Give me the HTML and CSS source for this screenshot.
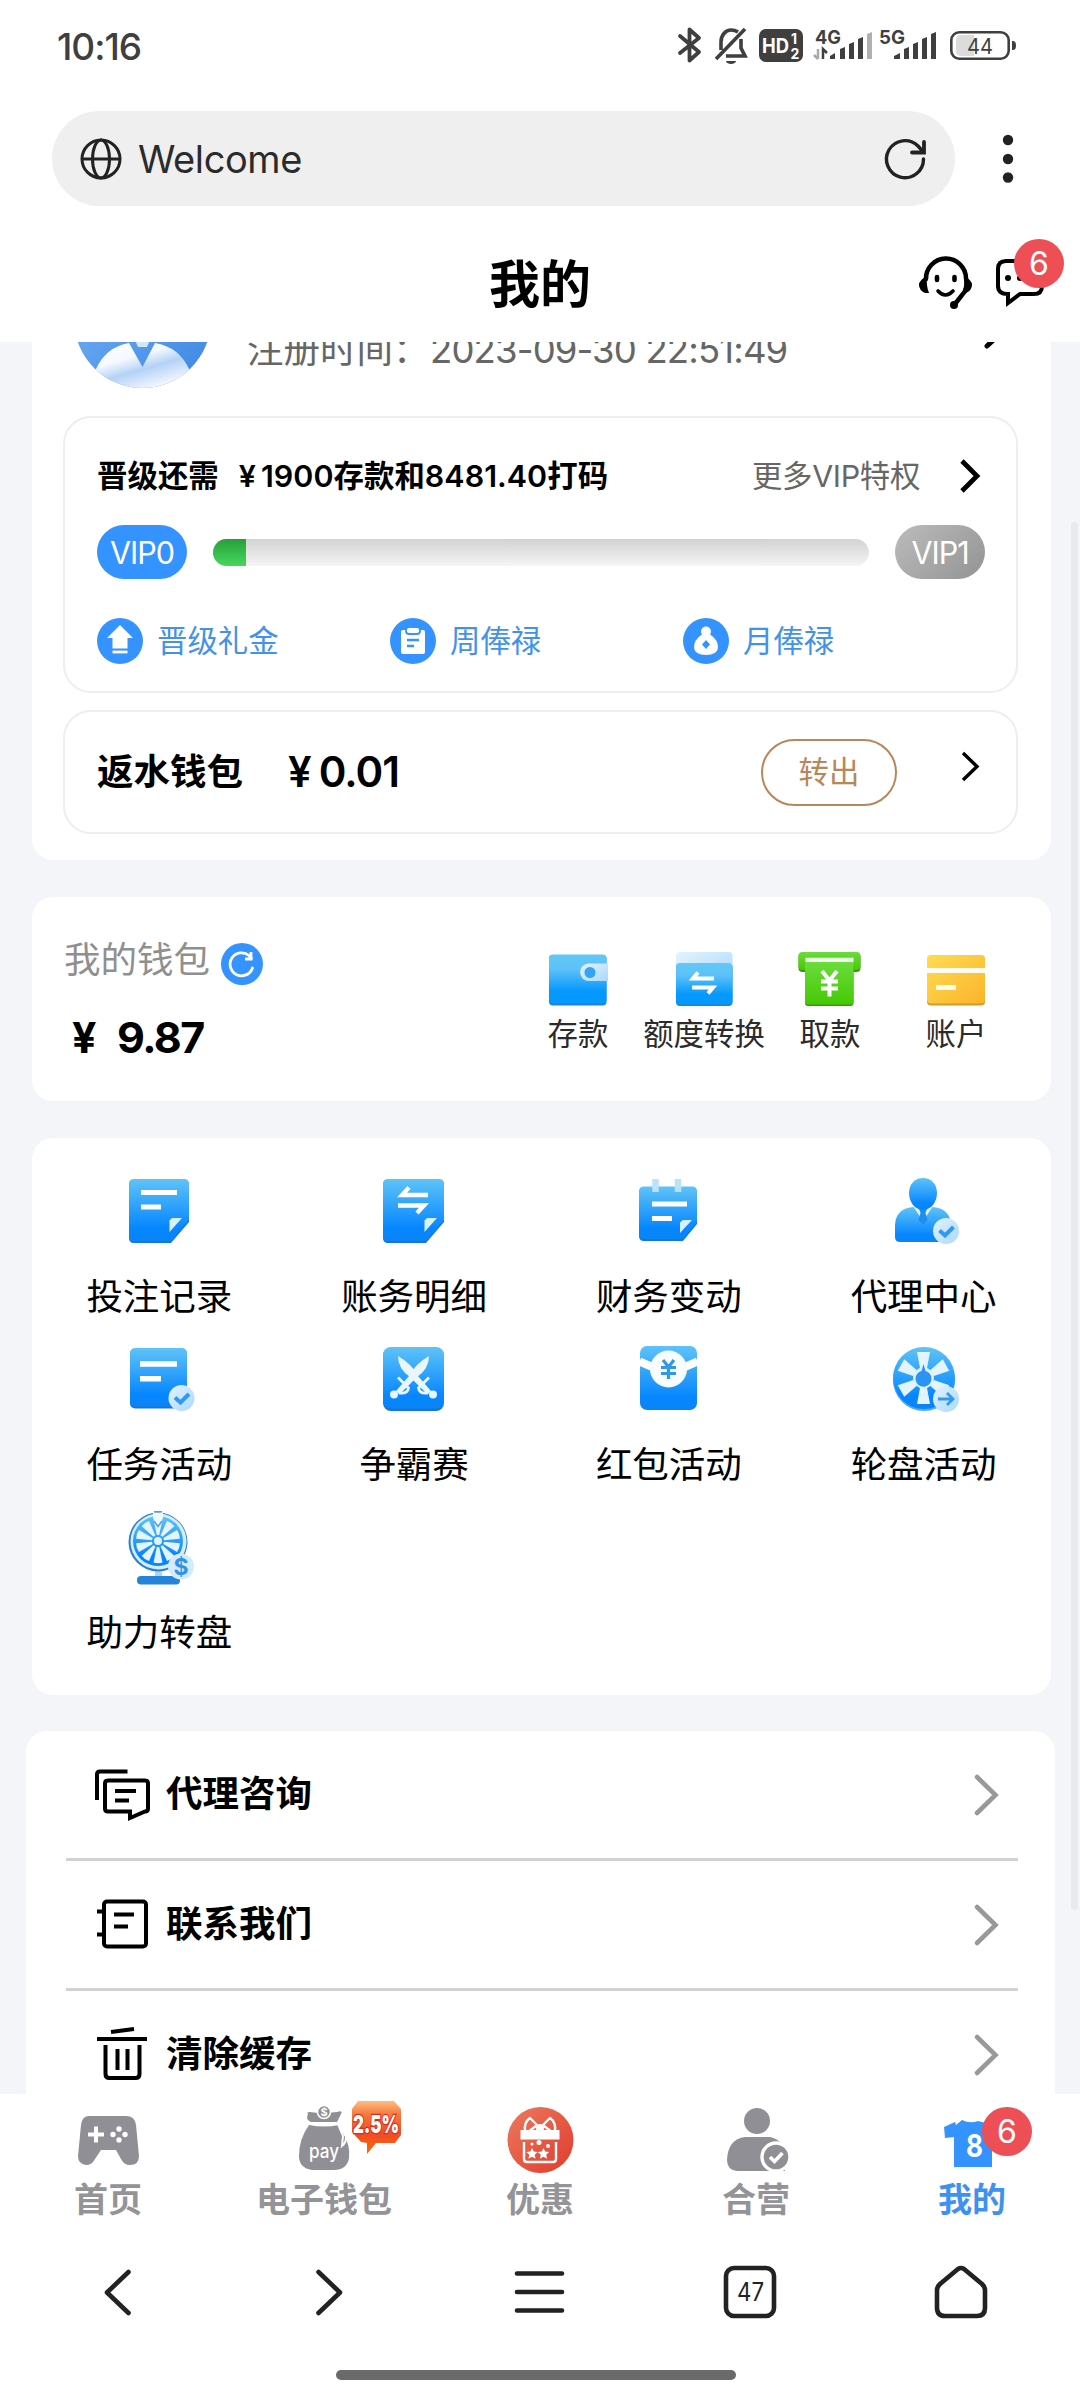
FILE: index.html
```html
<!DOCTYPE html>
<html lang="zh-CN">
<head>
<meta charset="utf-8">
<title>我的</title>
<link rel="stylesheet" href="styles.css">
</head>
<body>
<svg class="defs" width="0" height="0">
  <defs>
    <linearGradient id="blue" x1="0" y1="0" x2="0" y2="1"><stop offset="0" stop-color="#5fc3f8"/><stop offset=".8" stop-color="#0686ff"/><stop offset="1" stop-color="#0a84f5"/></linearGradient>
    <linearGradient id="sky" x1="0" y1="0" x2="0" y2="1"><stop offset="0" stop-color="#62c8f8"/><stop offset=".3" stop-color="#5cc1f7"/><stop offset=".75" stop-color="#0598ff"/><stop offset="1" stop-color="#0598ff"/></linearGradient>
    <linearGradient id="pale" x1="0" y1="0" x2="1" y2="1"><stop offset="0" stop-color="#e4f3ff"/><stop offset="1" stop-color="#a9d8fd"/></linearGradient>
    <linearGradient id="green" x1="0" y1="0" x2="0" y2="1"><stop offset="0" stop-color="#6bdc3c"/><stop offset="1" stop-color="#45c904"/></linearGradient>
    <linearGradient id="gold" x1="0" y1="0" x2="1" y2="1"><stop offset="0" stop-color="#ffdc52"/><stop offset="1" stop-color="#fbb42b"/></linearGradient>
    <linearGradient id="shine" x1="0" y1="0" x2="1" y2="0"><stop offset="0" stop-color="#0b6fd6"/><stop offset=".45" stop-color="#8fd2ff"/><stop offset="1" stop-color="#0b74df"/></linearGradient>
    <linearGradient id="sail" x1="0" y1="0" x2=".6" y2="1"><stop offset="0" stop-color="#ffffff"/><stop offset=".4" stop-color="#f4f9ff"/><stop offset=".65" stop-color="#b4d2f6"/><stop offset="1" stop-color="#f2f7fe"/></linearGradient>
    <linearGradient id="deep" x1="0" y1="0" x2="1" y2="1"><stop offset="0" stop-color="#79b6f7"/><stop offset="1" stop-color="#3b85e3"/></linearGradient>
    <linearGradient id="flame" x1="0" y1="0" x2="0" y2="1"><stop offset="0" stop-color="#ffbe7d"/><stop offset=".25" stop-color="#f5793f"/><stop offset=".6" stop-color="#ef4a2a"/><stop offset="1" stop-color="#ff6a00"/></linearGradient>
    <linearGradient id="coral" x1="0" y1="0" x2="1" y2="1"><stop offset="0" stop-color="#ec7a5e"/><stop offset="1" stop-color="#e03b2d"/></linearGradient>
    <clipPath id="face"><circle cx="68.5" cy="68.5" r="68.5"/></clipPath>
  </defs>
</svg>

<header class="top">
  <div class="status">
    <span class="clock">10:16</span>
    <div class="indicators">
      <svg width="26" height="40" viewBox="0 0 26 40" fill="none" stroke="#3f3f3f" stroke-width="3.8" stroke-linejoin="round" stroke-linecap="round"><path d="M3 11 22 27 12.5 35.500V4.500L22 13 3 28"/></svg>
      <svg width="34" height="40" viewBox="0 0 34 40" fill="none" stroke="#3f3f3f" stroke-width="3.600"><path d="M7 25V17a10 12 0 0 1 10-12q4 0 7 2M27 14V23l4 8H12M2 34 31 4"/><path d="M12 36a5 3 0 0 0 10 0z" fill="#3f3f3f" stroke="none"/></svg>
      <svg width="44" height="40" viewBox="0 0 44 40"><rect y="4" width="44" height="33" rx="7" fill="#3f3f3f"/><text class="glyph heavy" x="3" y="27.500" font-size="20" textLength="27" lengthAdjust="spacingAndGlyphs" fill="#fff">HD</text><text class="glyph heavy" x="32" y="19" font-size="14" fill="#fff">1</text><text class="glyph heavy" x="31.500" y="33.500" font-size="14" fill="#fff">2</text></svg>
      <svg width="60" height="40" viewBox="0 0 60 40" fill="#3f3f3f"><text class="glyph heavy" x="1" y="18.500" font-size="19" textLength="26" lengthAdjust="spacingAndGlyphs">4G</text><path d="M4 24v10M0 30l4 4" stroke="#aaa" stroke-width="2.500" fill="none"/><path d="M9 34V24l4 4" stroke="#3f3f3f" stroke-width="2.500" fill="none"/><path d="M16 34v-3l5-3v6zM26 34V24l5-2v12zM35 34V19l5-2v17zM44 34V14l5-2v22z"/><path d="M53 34V9l5-2v27z" fill="#b0b0b0"/></svg>
      <svg width="60" height="40" viewBox="0 0 60 40" fill="#3f3f3f"><text class="glyph heavy" x="0" y="18.500" font-size="19" textLength="26" lengthAdjust="spacingAndGlyphs">5G</text><path d="M15 34v-3l6-3v6zM25 34V24l5-2v12zM34 34V19l5-2v17zM43 34V14l5-2v22zM52 34V9l5-2v27z"/></svg>
      <svg width="68" height="40" viewBox="0 0 68 40"><rect x="1.300" y="7.300" width="57.400" height="26.400" rx="8" fill="#fff" stroke="#3f3f3f" stroke-width="2.600"/><path d="M11 10h13v21H11q-5 0-5-5V15q0-5 5-5z" fill="#dcdcdc"/><path d="M62 16h1q3 0 3 4.500t-3 4.500h-1z" fill="#3f3f3f"/><text class="glyph" x="17" y="28.500" font-size="22" textLength="26" lengthAdjust="spacingAndGlyphs" fill="#3f3f3f">44</text></svg>
    </div>
  </div>
  <div class="address">
    <div class="field">
      <svg width="42" height="42" viewBox="0 0 42 42" fill="none" stroke="#222" stroke-width="3"><circle cx="21" cy="21" r="19"/><ellipse cx="21" cy="21" rx="8.500" ry="19"/><path d="M2 21h38"/></svg>
      <span class="site">Welcome</span>
      <svg width="42" height="42" viewBox="0 0 42 42" fill="none" stroke="#222" stroke-width="3.400"><path d="M39.500 21A18.500 18.500 0 1 1 34 8l4 4.500" stroke-linecap="round"/><path d="M40 4v10.500H28" stroke-width="3.800" stroke-linecap="round"/></svg>
    </div>
    <svg width="12" height="50" viewBox="0 0 12 50" fill="#222"><circle cx="6" cy="6" r="5.200"/><circle cx="6" cy="25" r="5.200"/><circle cx="6" cy="43.500" r="5.200"/></svg>
  </div>
  <div class="titlebar">
    <h1>我的</h1>
    <div class="actions">
      <svg width="54" height="54" viewBox="0 0 54 54" fill="none" stroke="#000" stroke-width="4.500" stroke-linecap="round"><path d="M7 22a19.500 19.500 0 0 1 40-1q2 12-4 17l-7 9"/><path d="M8 19q-8 4-8 9t6 8l4 0q-3-7-2-17zM45 19q8 4 8 9t-6 8l-4 0q4-7 2-17z" fill="#000" stroke="none"/><circle cx="35" cy="48" r="4" fill="#000" stroke="none"/><path d="M18 20v3M35.500 20v3" stroke-width="4.600"/><path d="M19 34q7.500 8 15 0" stroke-width="3.600"/></svg>
      <div class="messages">
        <svg width="48" height="50" viewBox="0 0 48 50"><path d="M10 4h28q8 0 8 8v17q0 8-8 8H24L12 46v-9q-10 0-10-8V12q0-8 8-8z" fill="none" stroke="#000" stroke-width="4"/><circle cx="12" cy="21" r="3"/><circle cx="24" cy="21" r="3"/></svg>
        <span class="count">6</span>
      </div>
    </div>
  </div>
</header>

<main class="scroll">
  <section class="card member">
    <div class="profile">
      <svg class="avatar" width="137" height="137" viewBox="0 0 137 137"><g clip-path="url(#face)"><rect width="137" height="137" fill="url(#deep)"/><path d="M55 92 68.500 116 81 92q24 4 34 26v19H22v-19q10-22 33-26z" fill="url(#sail)"/><path d="M61 89h15l-3 7h-9z" fill="#cfe9fb"/></g></svg>
      <span class="since">注册时间：</span><span class="date">2023-09-30 22:51:49</span>
      <svg class="more" width="24" height="36" viewBox="0 0 24 36" fill="none" stroke="#000" stroke-width="5" stroke-linecap="round"><path d="M4 3 20 18 4 33"/></svg>
    </div>
    <div class="panel vip">
      <div class="need">
        <strong>晋级还需<i>¥</i>1900存款和8481.40打码</strong>
        <span>更多VIP特权</span>
        <svg width="24" height="36" viewBox="0 0 24 36" fill="none" stroke="#000" stroke-width="4.800"><path d="M4 3 19 18 4 33"/></svg>
      </div>
      <div class="level">
        <span class="pill">VIP0</span>
        <div class="track"><div class="bar" style="width:5%"></div></div>
        <span class="pill next">VIP1</span>
      </div>
      <ul class="perks">
        <li><svg width="46" height="46" viewBox="0 0 46 46"><circle cx="23" cy="23" r="23" fill="#3593ff"/><path d="M23 7 36 20h-5.500v10.500h-15V20H10z" fill="#fff"/><path d="M15.500 34h15" stroke="#fff" stroke-width="2.800"/></svg>晋级礼金</li>
        <li><svg width="46" height="46" viewBox="0 0 46 46"><circle cx="23" cy="23" r="23" fill="#3593ff"/><path d="M13 12h20q2 0 2 2v20q0 2-2 2H13q-2 0-2-2V14q0-2 2-2z" fill="#fff"/><rect x="16" y="9" width="14" height="7" rx="3" fill="#fff" stroke="#3593ff" stroke-width="1.800"/><path d="M17 22h12M17 28h7" stroke="#3593ff" stroke-width="2.400"/></svg>周俸禄</li>
        <li><svg width="46" height="46" viewBox="0 0 46 46"><circle cx="23" cy="23" r="23" fill="#3593ff"/><circle cx="23" cy="13.500" r="5" fill="#fff"/><path d="M19.500 16h7q9 6 8.500 14-1 7-12 7t-12-7q-.5-8 8.500-14z" fill="#fff"/><path d="m23 22 4 4.500-4 4.500-4-4.500z" fill="#3593ff"/></svg>月俸禄</li>
      </ul>
    </div>
    <div class="panel rebate">
      <strong>返水钱包</strong>
      <b class="sum"><i>¥</i>0.01</b>
      <button>转出</button>
      <svg width="24" height="34" viewBox="0 0 24 34" fill="none" stroke="#000" stroke-width="3.400"><path d="M4 4 18 17.500 4 31"/></svg>
    </div>
  </section>

  <section class="card wallet">
    <div class="balance">
      <div class="caption">我的钱包<svg width="42" height="42" viewBox="0 0 42 42" fill="none" stroke="#fff" stroke-width="2.800"><circle cx="21" cy="21" r="21" fill="#3593ff" stroke="none"/><path d="M31.500 25A11.500 11.500 0 1 1 28 12.500l2.500 3" stroke-linecap="round"/><path d="M30 9v7h-6"/></svg></div>
      <div class="money"><i>¥</i>9.87</div>
    </div>
    <ul class="ops">
      <li><svg width="66" height="60" viewBox="0 0 66 60"><rect x="4" y="5" width="57.500" height="50.500" rx="4" fill="#1b82d4"/><rect x="4" y="4.500" width="57.500" height="49" rx="4" fill="url(#sky)"/><path d="M14 54.500h36" stroke="url(#shine)" stroke-width="1.500"/><path d="M63 13.500H43a8.800 8.800 0 0 0 0 17.500H63z" fill="url(#pale)"/><circle cx="45" cy="22.500" r="5.500" fill="#31a4f6"/></svg>存款</li>
      <li><svg width="66" height="60" viewBox="0 0 66 60"><rect x="5" y="2" width="56.500" height="30" rx="4" fill="url(#pale)"/><rect x="5" y="14" width="56.500" height="42" rx="4" fill="#1b82d4"/><rect x="5" y="13" width="56.500" height="41.500" rx="4" fill="url(#sky)"/><path d="M14 55.200h36" stroke="url(#shine)" stroke-width="1.500"/><path d="M43 28.500H22l5-6M21 37.500H42l-5 6" fill="none" stroke="#fff" stroke-width="4"/></svg>额度转换</li>
      <li><svg width="66" height="60" viewBox="0 0 66 60"><rect x="1.500" y="3" width="62" height="19" rx="4" fill="#329c0e"/><rect x="1.500" y="2" width="62" height="18" rx="4" fill="url(#green)"/><path d="M8.500 10h48" stroke="#f0ffe9" stroke-width="4.500"/><rect x="8" y="14" width="48.500" height="42" rx="3" fill="#329c0e"/><rect x="8" y="12" width="48.500" height="42.500" rx="3" fill="url(#green)"/><path d="m25 21 7.500 9.500L40 21M32.500 30v16.500M24 31.500h17M24 38.500h17" fill="none" stroke="#fff" stroke-width="4"/></svg>取款</li>
      <li><svg width="66" height="60" viewBox="0 0 66 60"><rect x="4" y="6" width="58" height="49.500" rx="4" fill="#d4982b"/><rect x="4" y="5" width="58" height="48.500" rx="4" fill="url(#gold)"/><path d="M4 20.500h58M13 37.500h20" stroke="#fffbee" stroke-width="5"/></svg>账户</li>
    </ul>
  </section>

  <section class="card">
    <ul class="grid">
      <li><svg width="66" height="76" viewBox="0 0 66 76"><path d="M9 5h50q5 0 5 5v37L46 68H9q-5 0-5-5V10q0-5 5-5z" fill="#1277dc"/><path d="M9 4h50q5 0 5 5v36L46 66H9q-5 0-5-5V9q0-5 5-5z" fill="url(#blue)"/><path d="M8 66.800h38" stroke="url(#shine)" stroke-width="2"/><path d="M16 17.500h36M16 32h20" stroke="#fff" stroke-width="5"/><path d="M47 43h10L44.500 57V45.500z" fill="#d9f0ff"/></svg>投注记录</li>
      <li><svg width="66" height="76" viewBox="0 0 66 76"><path d="M8 5h51q5 0 5 5v37L46 68H8q-5 0-5-5V10q0-5 5-5z" fill="#1277dc"/><path d="M8 4h51q5 0 5 5v36L46 66H8q-5 0-5-5V9q0-5 5-5z" fill="url(#blue)"/><path d="M8 66.800h38" stroke="url(#shine)" stroke-width="2"/><path d="M48 20H22l7-7.500M18 30.500H44L37 38" fill="none" stroke="#fff" stroke-width="4.300"/><path d="M47 43h10L44.500 57V45.500z" fill="#d9f0ff"/></svg>账务明细</li>
      <li><svg width="66" height="76" viewBox="0 0 66 76"><path d="M9 13h48q5 0 5 5v31L48 66H9q-5 0-5-5V18q0-5 5-5z" fill="#1277dc"/><path d="M9 11.500h48q5 0 5 5V47L48 64H9q-5 0-5-5V16.500q0-5 5-5z" fill="url(#blue)"/><path d="M8 64.800h38" stroke="url(#shine)" stroke-width="2"/><path d="M20.500 4v13M43 4v13" stroke="#b9e2fd" stroke-width="6.500"/><path d="M17 29h35M17 43.500h20" stroke="#fff" stroke-width="5"/><path d="M48 45h9L45 58V47.500z" fill="#d9f0ff"/></svg>财务变动</li>
      <li><svg width="70" height="76" viewBox="-2 0 70 76"><path d="M5 50Q6 33 24 32h18q18 1 19 18v17H10q-5 0-5-5z" fill="url(#blue)"/><path d="M9 67h38" stroke="url(#shine)" stroke-width="1.600"/><path d="m23 31 10 15 10-15z" fill="#eaf6ff"/><path d="m29 34h8l-1.500 4 2 7-4.500 5-4.500-5 2-7z" fill="#1d8ef4"/><path d="M33 3c8 0 14 6 14 15s-6 17-14 17-14-8-14-17S25 3 33 3z" fill="url(#blue)"/><circle cx="56" cy="56" r="13" fill="url(#pale)"/><path d="m49.500 55.500 5.500 5 8.500-8.500" fill="none" stroke="#3199f2" stroke-width="4"/></svg>代理中心</li>
      <li><svg width="72" height="76" viewBox="-3 0 72 76"><rect x="5" y="6" width="57" height="59.500" rx="5" fill="#1277dc"/><rect x="5" y="5" width="57" height="58.500" rx="5" fill="url(#blue)"/><path d="M9 64.300h36" stroke="url(#shine)" stroke-width="2"/><path d="M15 21h37M15 35.800h21" stroke="#fff" stroke-width="5.500"/><circle cx="56.500" cy="55" r="13" fill="url(#pale)"/><path d="m50 54.500 5.500 5 8.500-8.500" fill="none" stroke="#3199f2" stroke-width="4"/></svg>任务活动</li>
      <li><svg width="66" height="76" viewBox="0 0 66 76"><rect x="3" y="5" width="61" height="63" rx="8" fill="#1277dc"/><rect x="3" y="4" width="61" height="61.500" rx="8" fill="url(#blue)"/><path d="M10 66.800h46" stroke="url(#shine)" stroke-width="2"/><g id="saber" fill="#e9f6ff"><path d="M18 13q14 8 20 20l13 15-3.500 3.500L30 34Q18 26 18 13z"/><circle cx="53" cy="51.500" r="4"/><path d="M49 34.500 38.500 45q1 6 9 5" fill="none" stroke="#e9f6ff" stroke-width="2.800"/></g><use href="#saber" transform="matrix(-1 0 0 1 67 0)"/></svg>争霸赛</li>
      <li><svg width="66" height="76" viewBox="0 0 66 76"><rect x="5" y="3" width="57" height="64" rx="7" fill="url(#blue)"/><path d="M10 66h46" stroke="url(#shine)" stroke-width="2"/><path d="m4.500 18.500 14 6M62.500 18.500l-14 6" stroke="#fff" stroke-width="8"/><circle cx="33.500" cy="26" r="18.500" fill="#f7fcff"/><path d="m28 17 5.500 7 5.500-7M33.500 24v12M26 24.500h15M26 30.500h15" fill="none" stroke="#3298e6" stroke-width="3.200"/></svg>红包活动</li>
      <li><svg width="70" height="76" viewBox="-2 0 70 76"><circle cx="34" cy="37" r="31" fill="#52aaf5"/><circle cx="34" cy="35" r="31" fill="url(#blue)"/><g fill="#e4f4ff"><path id="fan" d="M27 9h13l-3 16h-7z"/><use href="#fan" transform="rotate(60 33.500 35)"/><use href="#fan" transform="rotate(120 33.500 35)"/><use href="#fan" transform="rotate(180 33.500 35)"/><use href="#fan" transform="rotate(240 33.500 35)"/><use href="#fan" transform="rotate(300 33.500 35)"/><circle cx="33.500" cy="35" r="10.500"/></g><path d="m33.500 21 2 7a8 8 0 1 1-4 0z" fill="#2b93f3"/><circle cx="56" cy="56" r="13" fill="url(#pale)"/><path d="M48 56h14M57 50l6 6-6 6" fill="none" stroke="#3199f2" stroke-width="2.800"/></svg>轮盘活动</li>
      <li><svg width="70" height="76" viewBox="-2 0 70 76"><rect x="12" y="65" width="43" height="8.500" rx="4" fill="#2484dc"/><path d="M20 70h27" stroke="url(#shine)" stroke-width="4"/><path d="M30 55h7v10h-7z" fill="#a5d8fb"/><circle cx="33" cy="31" r="29.500" fill="#2b83d0"/><circle cx="33.500" cy="30.500" r="28" fill="#d5edff"/><circle cx="33" cy="30" r="25" fill="url(#blue)"/><g fill="#e4f4ff"><path id="slice" d="M28.500 8.500q4.500-1.500 9 0L34.200 24h-2.400z"/><use href="#slice" transform="rotate(36 33 30)"/><use href="#slice" transform="rotate(72 33 30)"/><use href="#slice" transform="rotate(108 33 30)"/><use href="#slice" transform="rotate(144 33 30)"/><use href="#slice" transform="rotate(180 33 30)"/><use href="#slice" transform="rotate(216 33 30)"/><use href="#slice" transform="rotate(252 33 30)"/><use href="#slice" transform="rotate(288 33 30)"/><use href="#slice" transform="rotate(324 33 30)"/></g><circle cx="33" cy="30" r="4" fill="#dff2ff"/><path d="M28 2h10v5l-5 8-5-8z" fill="#eff9ff"/><path d="M29 0h8v1.500h-8z" fill="#4aa3ea"/><path d="m29 10 4 5.500 4-5.500" fill="none" stroke="#4aa3ea" stroke-width="1.500"/><circle cx="56" cy="55.500" r="13" fill="#d4ebfd"/><text class="glyph heavy" x="56" y="64" font-size="23" text-anchor="middle" fill="#2f93e8">$</text></svg>助力转盘</li>
    </ul>
  </section>

  <section class="card menu">
    <a class="row"><svg width="60" height="60" viewBox="0 0 60 60" fill="none" stroke="#000" stroke-width="4"><path d="M35.500 6.500H8q-3 0-3 3V35"/><path d="M16 15.500h37q3 0 3 3v25q0 3-3 3L38 53v-6.500H16q-3 0-3-3v-25q0-3 3-3z"/><path d="M23 26h21M23 35.500h14"/></svg><span>代理咨询</span><svg class="go" width="26" height="42" viewBox="0 0 26 42"><path d="M3 3 21.500 21 3 39"/></svg></a>
    <a class="row"><svg width="60" height="60" viewBox="0 0 60 60" fill="none" stroke="#000" stroke-width="4"><rect x="12" y="6.500" width="42" height="45" rx="3"/><path d="M5 16.500h7M5 39.500h7M22 19.500h20M22 31.500h14"/></svg><span>联系我们</span><svg class="go" width="26" height="42" viewBox="0 0 26 42"><path d="M3 3 21.500 21 3 39"/></svg></a>
    <a class="row"><svg width="60" height="60" viewBox="0 0 60 60" fill="none" stroke="#000" stroke-width="4"><path d="M5 14h50M19 7l23-3M13.500 20v29q0 4 4 4h26q4 0 4-4V20M25.500 24v21M35.500 24v21"/></svg><span>清除缓存</span><svg class="go" width="26" height="42" viewBox="0 0 26 42"><path d="M3 3 21.500 21 3 39"/></svg></a>
  </section>
  <div class="thumb"></div>
</main>

<nav class="tabs">
  <a><svg width="70" height="74" viewBox="1 0 70 74"><path d="M17 12h37q9 0 10 9l3 31q0 9-9 9-6 0-9-6l-5-9H29l-6 9q-3 6-9 6-8-1-8-9l3-31q1-9 8-9z" fill="#8f8f95"/><path d="M16 30.500h16M24 22.500v16" stroke="#fff" stroke-width="4"/><g fill="#fff"><circle cx="47" cy="25" r="2.700"/><circle cx="47" cy="36" r="2.700"/><circle cx="41" cy="30.500" r="2.700"/><circle cx="53" cy="30.500" r="2.700"/></g></svg>首页</a>
  <a><svg width="70" height="74" viewBox="-1 0 70 74"><path d="M18 10q-2-2 2-2 11 2 27 0 6-2 4 2l-4 8H21q-6-3-3-8z" fill="#8f8f95"/><circle cx="34" cy="8" r="6.500" fill="#8f8f95" stroke="#fff" stroke-width="1.500"/><text class="glyph" x="34" y="12" font-size="11" text-anchor="middle" fill="#fff">$</text><path d="M19 21q15 3 30 0l2 5q10 15 8 28-2 12-15 12H22Q9 64 9 52q0-17 10-31z" fill="#8f8f95"/><path d="m48 20 5 12-1 10q4-3 4-9" fill="none" stroke="#fff" stroke-width="2"/><text class="glyph mid" x="34" y="54" font-size="19" text-anchor="middle" textLength="30" lengthAdjust="spacingAndGlyphs" fill="#fff">pay</text></svg>电子钱包
    <svg class="offer" width="54" height="56" viewBox="0 0 54 56"><path d="M9 1h36l7 8v26l-6 8H27l-9 11v-11l-6-1-9-10V9z" fill="url(#flame)"/><text class="glyph black" x="27" y="33" font-size="25" text-anchor="middle" textLength="46" lengthAdjust="spacingAndGlyphs" fill="#fff">2.5%</text></svg></a>
  <a><svg width="70" height="74" viewBox="0 0 70 74"><circle cx="35.500" cy="36" r="33" fill="url(#coral)"/><g fill="none" stroke="#fff" stroke-width="2.400" stroke-linejoin="round"><path d="M20 27q-1-9 5-13l8 8M50 27q1-9-5-13l-8 8M23 28l8-6M47 28l-8-6"/><path d="M19 38v17q0 3 3 3h26q3 0 3-3V38"/></g><rect x="15.500" y="26" width="39" height="9.500" fill="#fff"/><circle cx="35" cy="24" r="4" fill="#fff"/><path id="star" d="m27 44 1.700 3.600 4 .4-3 2.700.9 4-3.600-2-3.600 2 .9-4-3-2.700 4-.4z" fill="#fff"/><use href="#star" x="11.500" y="0"/><circle cx="34" cy="38.500" r="2.500" fill="#fff"/><circle cx="27" cy="40" r="1.500" fill="#fff"/><circle cx="43" cy="42" r="2" fill="#fff"/></svg>优惠</a>
  <a><svg width="70" height="74" viewBox="0 0 70 74"><circle cx="36" cy="17" r="13" fill="#8f8f95"/><path d="M24 33h25q15 3 15 20v14H16Q6 66 6 56q1-21 18-23z" fill="#8f8f95"/><circle cx="55" cy="53" r="14" fill="#8f8f95" stroke="#fff" stroke-width="3.400"/><path d="m49 53 4.500 4.500 8-8.500" fill="none" stroke="#fff" stroke-width="3.600"/></svg>合营</a>
  <a class="on"><svg width="70" height="74" viewBox="0 0 70 74"><path d="m7 23 11-5 1 3 6-5q8 4 16 1l12 3 9 6-4 11-3-2v28H17V33l-9 1z" fill="#3593ff"/><text class="glyph heavy" x="37.500" y="53" font-size="31" text-anchor="middle" textLength="17" lengthAdjust="spacingAndGlyphs" fill="#fff">8</text></svg>我的<span class="count">6</span></a>
</nav>

<nav class="browser">
  <svg width="56" height="56" viewBox="0 0 56 56"><path d="M38.500 8 17 28.500 38.500 49"/></svg>
  <svg width="56" height="56" viewBox="1 0 56 56"><path d="M18.500 8 40 28.500 18.500 49"/></svg>
  <svg width="56" height="56" viewBox="1 0 56 56"><path d="M6 9.500h45M6 28h45M6 46.500h45"/></svg>
  <svg width="56" height="56" viewBox="1 0 56 56"><rect x="4" y="4" width="48" height="48" rx="8"/><text class="glyph" x="28.500" y="37" font-size="25" text-anchor="middle" textLength="27" lengthAdjust="spacingAndGlyphs">47</text></svg>
  <svg width="56" height="56" viewBox="1 0 56 56"><path d="M25 5q3-2 6 0l18 15q3 3 3 6v18q0 8-8 8H12q-8 0-8-8V26q0-3 3-6z"/></svg>
</nav>
<div class="home"></div>
</body>
</html>
```
FILE: styles.css
```css
* { box-sizing: border-box; }
body {
  margin: 0;
  width: 1080px;
  height: 2400px;
  overflow: hidden;
  display: flex;
  flex-direction: column;
  background: #fff;
  color: #000;
  font-family: Inter, "Noto Sans CJK SC", sans-serif;
  line-height: 1;
}
h1, ul { margin: 0; padding: 0; list-style: none; }
i { font-style: normal; }
svg { display: block; flex: none; overflow: visible; }
.defs { position: absolute; }
.glyph { font-family: Inter, sans-serif; stroke: none; }
.glyph.mid { font-weight: 500; }
.glyph.heavy { font-weight: 700; }
.glyph.black { font-weight: 900; stroke: #d92d1e; stroke-width: 2.5px; paint-order: stroke; }

/* Top: status bar, address bar, page title */
.top { flex: none; height: 342px; }
.status { display: flex; align-items: center; justify-content: space-between; height: 92px; padding: 0 62px 0 57px; }
.clock { font-size: 37px; font-weight: 450; color: #3f3f3f; letter-spacing: -1px; }
.indicators { display: flex; gap: 11px; height: 40px; margin-top: -2px; }
.indicators svg:nth-child(5) { margin-left: -6px; }
.address { display: flex; align-items: center; gap: 47px; margin-top: 19px; padding-left: 52px; }
.field { display: flex; align-items: center; width: 903px; height: 95px; padding: 0 29px 0 28px; border-radius: 48px; background: #efefef; }
.site { flex: 1; padding-left: 16px; font-size: 38px; line-height: 46px; letter-spacing: -.4px; color: #2b2b2b; }
.titlebar { display: grid; grid-template-columns: 1fr auto 1fr; align-items: center; height: 136px; padding-top: 20px; }
.titlebar h1 { grid-column: 2; font-size: 51px; font-weight: 700; }
.actions { display: flex; gap: 23px; justify-content: flex-end; padding-right: 36px; }
.messages { position: relative; }
.count {
  position: absolute;
  top: -18px;
  right: -20px;
  width: 50px;
  height: 49px;
  border-radius: 50%;
  background: #ee4f57;
  color: #fff;
  font-size: 32px;
  line-height: 49px;
  text-align: center;
}

/* Scrolling content */
.scroll { position: relative; flex: none; height: 1752px; overflow: hidden; background: #f4f5f8; }
.card { margin: 0 29px 37px 32px; border-radius: 21px; background: #fff; }
.member { margin-top: -93px; padding: 1px 33px 26px 31px; }
.profile { display: flex; align-items: flex-start; height: 166px; padding-left: 11px; color: #666; font-size: 36.500px; }
.avatar { margin-top: 1px; }
.since, .date { margin-top: 82px; line-height: 36px; }
.since { width: 183px; margin-left: 36px; white-space: nowrap; }
.date { font-size: 36.500px; letter-spacing: -.85px; white-space: nowrap; }
.more { margin: 63px 11px 0 auto; }
.panel { border: 2px solid #eee; border-radius: 28px; }
.vip { height: 277px; padding: 40px 31px 0 32px; }
.need { display: flex; align-items: center; height: 36px; }
.need strong { font-size: 30.400px; font-weight: 600; letter-spacing: .05px; white-space: nowrap; }
.need i { margin: 0 5px 0 20px; }
.need span { margin-left: auto; font-size: 30.400px; color: #666; letter-spacing: -.3px; }
.need svg { margin: 0 3px 0 38px; }
.level { display: flex; align-items: center; gap: 26px; height: 54px; margin-top: 31px; }
.pill { width: 90px; height: 54px; border-radius: 27px; background: #3593ff; color: #fff; font-size: 30.500px; line-height: 55px; text-align: center; letter-spacing: -1px; }
.pill.next { background: linear-gradient(135deg, #bcbcbc, #939393); }
.track { flex: 1; height: 27px; border-radius: 14px; background: linear-gradient(#d3d3d3, #f5f5f5); overflow: hidden; }
.bar { height: 27px; background: linear-gradient(#279f3b, #46d75c); }
.perks { display: grid; grid-template-columns: 293px 293px 1fr; margin-top: 39px; }
.perks li { display: flex; align-items: center; gap: 14px; color: #4292ea; font-size: 30.400px; }
.rebate { display: flex; align-items: center; height: 124px; margin-top: 17px; padding: 0 33px 0 32px; }
.rebate strong { font-size: 36.500px; font-weight: 700; }
.sum { margin-left: 45px; font-size: 42px; font-weight: 600; letter-spacing: -1px; }
.sum i { margin-right: 8px; }
.rebate button { width: 136px; height: 67px; margin-left: auto; border: 2px solid #b98659; border-radius: 34px; background: none; color: #b98659; font: 30.400px/1 Inter, "Noto Sans CJK SC", sans-serif; }
.rebate svg { margin: -12px 0 0 62px; }

/* Balance and wallet operations */
.wallet { display: flex; justify-content: space-between; height: 204px; padding: 39px 32px 0; }
.caption { display: flex; align-items: center; gap: 11px; height: 48px; font-size: 36.500px; color: #8f8f8f; }
.caption svg { margin-top: 8px; }
.money { margin-top: 32px; padding-left: 8px; font-size: 43px; font-weight: 650; letter-spacing: -1.5px; }
.money i { margin-right: 22px; }
.ops { display: grid; grid-template-columns: repeat(4, 126px); margin-top: 14px; }
.ops li { display: flex; flex-direction: column; align-items: center; gap: 9px; color: #2b2b2b; font-size: 30.400px; }

/* Feature shortcuts */
.grid { display: grid; grid-template-columns: repeat(4, 1fr); grid-auto-rows: 168px; height: 557px; padding-top: 37px; }
.grid li { display: flex; flex-direction: column; align-items: center; gap: 28px; font-size: 36.500px; }
.grid svg { margin-right: 2px; }

/* Settings list */
.menu { margin: -1px 25px 0 26px; padding: 0 37px 0 40px; height: 420px; }
.row { display: flex; align-items: center; height: 130px; padding: 0 18px 0 26px; border-bottom: 3px solid #d2d2d2; font-size: 36.500px; font-weight: 600; }
.row:last-child { border-color: transparent; }
.row span { margin-left: 14px; }
.go { margin-left: auto; fill: none; stroke: #999; stroke-width: 4.600; stroke-linecap: round; }
.thumb { position: absolute; top: 180px; right: 2px; width: 7px; height: 1388px; border-radius: 4px; background: #e9eaec; }

/* Site tabs */
.tabs { display: grid; grid-template-columns: repeat(5, 1fr); flex: none; height: 136px; padding-top: 10px; }
.tabs a { position: relative; display: flex; flex-direction: column; align-items: center; gap: 5px; color: #939398; font-size: 34px; font-weight: 700; }
.tabs .on { color: #3f91f0; }
.tabs .count { top: 3px; right: 48px; font-weight: 400; }
.offer { position: absolute; top: -4px; left: 133px; }

/* Browser navigation */
.browser { display: flex; justify-content: space-between; flex: none; height: 140px; padding: 34px 90px 0; }
.browser svg { fill: none; stroke: #222; stroke-width: 4.600; stroke-linecap: round; stroke-linejoin: round; }
.browser text { fill: #222; }
.home { flex: none; width: 400px; height: 10px; margin: 0 0 0 336px; border-radius: 5px; background: #6a6a6a; }
```
